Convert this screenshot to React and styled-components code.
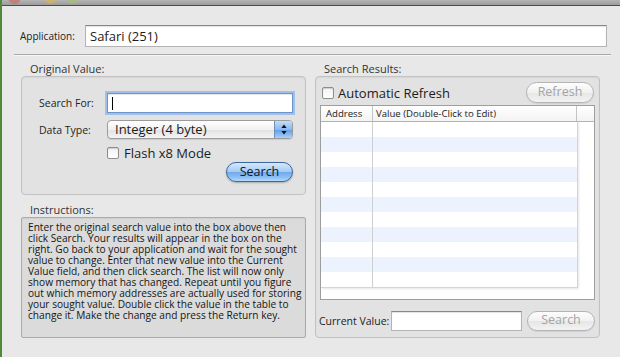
import React from "react";
import styled, { createGlobalStyle } from "styled-components";

const FONT = `"Open Sans", "DejaVu Sans", sans-serif`;

const Global = createGlobalStyle`
  html, body { margin: 0; padding: 0; background: #e8e8e8; }
  * { box-sizing: border-box; }
`;

const Window = styled.div`
  width: 620px;
  height: 357px;
  overflow: hidden;
  background: #e8e8e8;
  border-left: 2px solid #4f8a3c;
  display: flex;
  flex-direction: column;
  font-family: ${FONT};
  color: #1c1c1c;
`;

const TitleBar = styled.div`
  height: 6px;
  flex: none;
  background: linear-gradient(#b4b4b4, #9c9c9c);
  border-bottom: 1px solid #4c4c4c;
  display: flex;
  gap: 9px;
  padding-left: 6px;
  overflow: hidden;
`;

const Light = styled.span`
  width: 13px;
  height: 13px;
  margin-top: -9px;
  border-radius: 50%;
  background: ${(p) => p.$c};
  opacity: 0.55;
  &:nth-child(2) { margin-left: 14px; }
`;

const AppRow = styled.div`
  display: flex;
  align-items: center;
  margin-top: 19px;
  padding: 0 13px 0 18px;
`;

const AppLabel = styled.label`
  width: 65px;
  font-size: 10px;
  color: #222;
`;

const TextField = styled.div`
  height: ${(p) => p.$h || 20}px;
  background: #fff;
  border: 1px solid #b3b3b3;
  border-top-color: #878787;
  box-shadow: inset 0 1px 1px rgba(0, 0, 0, 0.12);
  display: flex;
  align-items: center;
  padding-left: 4px;
  font-size: 13px;
  ${(p) => (p.$grow ? "flex: 1;" : "")}
  ${(p) => (p.$w ? `width: ${p.$w}px; flex: none;` : "")}
  ${(p) =>
    p.$focus
      ? `border-color: #6e93c6; box-shadow: 0 0 0 2px #9fc0ea, inset 0 1px 1px rgba(0,0,0,0.1);`
      : ""}
`;

const Caret = styled.span`
  width: 1px;
  height: 13px;
  background: #000;
`;

const Separator = styled.div`
  height: 2px;
  margin: 7px 9px 0 12px;
  border-top: 1px solid #a8a8a8;
  border-bottom: 1px solid #f7f7f7;
`;

const Columns = styled.div`
  display: flex;
  gap: 9px;
  padding: 0 20px 0 19px;
  margin-top: 5px;
`;

const Column = styled.div`
  flex: 1 1 0;
  min-width: 0;
  display: flex;
  flex-direction: column;
`;

const GroupTitle = styled.div`
  height: 15px;
  line-height: 15px;
  padding-left: 9px;
  font-size: 11px;
  color: #333;
  margin-top: ${(p) => p.$mt || 0}px;
`;

const GroupBox = styled.div`
  height: ${(p) => p.$h}px;
  background: #e2e2e2;
  border: 1px solid #c2c2c2;
  border-radius: 4px;
  box-shadow: inset 0 1px 2px rgba(0, 0, 0, 0.06);
`;

const Form = styled(GroupBox)`
  padding: 16px 12px 0 17px;
  display: flex;
  flex-direction: column;
`;

const FormRow = styled.div`
  display: grid;
  grid-template-columns: 68px 1fr;
  align-items: center;
  margin-top: ${(p) => p.$mt || 0}px;
`;

const FieldLabel = styled.label`
  font-size: 10.5px;
  color: #222;
`;

const Popup = styled.div`
  height: 19px;
  display: flex;
  border: 1px solid #9c9c9c;
  border-radius: 4px;
  overflow: hidden;
  background: linear-gradient(#ffffff, #f1f1f1 50%, #e1e1e1 51%, #f4f4f4);
  box-shadow: 0 1px 1px rgba(0, 0, 0, 0.1);
`;

const PopupText = styled.span`
  flex: 1;
  font-size: 13px;
  line-height: 17px;
  padding-left: 7px;
`;

const Stepper = styled.span`
  width: 18px;
  border-left: 1px solid #6d8fbf;
  background: linear-gradient(#c4dcf8, #8ab9ef 50%, #5f9ce8 51%, #a8d0fb);
  display: flex;
  align-items: center;
  justify-content: center;
`;

const CheckRow = styled.label`
  display: flex;
  align-items: center;
  gap: ${(p) => p.$gap || 5}px;
  font-size: 13px;
  line-height: 16px;
  ${(p) => (p.$grow ? "flex: 1;" : "")}
  padding-left: ${(p) => p.$pl || 0}px;
`;

const CheckBox = styled.span`
  width: 12px;
  height: 12px;
  flex: none;
  border: 1px solid #8d8d8d;
  border-radius: 2px;
  background: linear-gradient(#f2f2f2, #ffffff);
  box-shadow: inset 0 1px 1px rgba(0, 0, 0, 0.15);
`;

const AquaButton = styled.button`
  justify-self: end;
  width: ${(p) => p.$w}px;
  height: ${(p) => p.$h || 20}px;
  flex: none;
  border-radius: 11px;
  font-family: ${FONT};
  font-size: 12.5px;
  padding: 0;
  line-height: 1;
  ${(p) =>
    p.$primary
      ? `
    border: 1px solid #3b679f;
    color: #0d1626;
    background: linear-gradient(#d6e8fc, #a4cbf4 48%, #72aaec 52%, #8cc0f5 80%, #b5dafd);
    box-shadow: 0 1px 2px rgba(0,0,0,0.25);
  `
      : `
    border: 1px solid #b4b4b4;
    color: #a4a4a4;
    background: linear-gradient(#fdfdfd, #f1f1f1 50%, #e6e6e6 51%, #f3f3f3);
    box-shadow: 0 1px 1px rgba(0,0,0,0.08);
  `}
`;

const Instructions = styled(GroupBox)`
  background: #dbdbdb;
  border-color: #ababab;
  border-radius: 2px;
  padding: 4px 2px 0 6px;
  font-size: 10.15px;
  line-height: 11px;
  color: #151515;
  overflow: hidden;
`;

const Line = styled.div`
  white-space: nowrap;
  height: 11px;
`;

const ResultsBox = styled(GroupBox)`
  padding: 5px 4px 0 4px;
  display: flex;
  flex-direction: column;
`;

const Toolbar = styled.div`
  height: 21px;
  display: flex;
  align-items: center;
  padding-right: 1px;
`;

const TableView = styled.div`
  margin-top: 2px;
  height: 195px;
  background: #fff;
  border: 1px solid #9e9e9e;
  display: flex;
  flex-direction: column;
`;

const Header = styled.div`
  display: grid;
  grid-template-columns: 52px 1fr 17px;
  height: 16px;
  flex: none;
  border-bottom: 1px solid #b3b3b3;
  background: linear-gradient(#ffffff, #f3f3f3);
`;

const HeadCell = styled.div`
  font-size: 9.6px;
  line-height: 15px;
  padding-left: ${(p) => p.$pl || 4}px;
  color: #222;
  white-space: nowrap;
  overflow: hidden;
  border-right: ${(p) => (p.$last ? "none" : "1px solid #c3c3c3")};
`;

const Body = styled.div`
  flex: 1;
  display: flex;
  padding: 0 16px 12px 0;
`;

const RowsArea = styled.div`
  flex: 1;
  display: flex;
  flex-direction: column;
  border-right: 1px solid #d4d4d4;
  border-bottom: 1px solid #d4d4d4;
  box-shadow: 1px 1px 2px rgba(0, 0, 0, 0.1);
`;

const Row = styled.div`
  height: 15px;
  flex: none;
  display: grid;
  grid-template-columns: 52px 1fr;
  background: ${(p) => (p.$alt ? "#edf3fe" : "#ffffff")};
`;

const Cell = styled.div`
  border-right: ${(p) => (p.$first ? "1px solid #cfcfcf" : "none")};
`;

const BottomRow = styled.div`
  margin-top: 10px;
  height: 21px;
  display: flex;
  align-items: center;
  padding-right: 1px;
`;

const BottomLabel = styled.label`
  width: 72px;
  flex: none;
  font-size: 10.5px;
  margin-left: -1px;
  color: #222;
`;

const Gap = styled.span`
  width: ${(p) => p.$w}px;
  flex: none;
`;

const instructionLines = [
  "Enter the original search value into the box above then",
  "click Search. Your results will appear in the box on the",
  "right. Go back to your application and wait for the sought",
  "value to change. Enter that new value into the Current",
  "Value field, and then click search. The list will now only",
  "show memory that has changed. Repeat until you figure",
  "out which memory addresses are actually used for storing",
  "your sought value. Double click the value in the table to",
  "change it. Make the change and press the Return key.",
];

function StepperIcon() {
  return (
    <svg width="6" height="11" viewBox="0 0 6 11">
      <path d="M3 0.5 L5.6 4 H0.4 Z" fill="#111" />
      <path d="M3 10.5 L5.6 7 H0.4 Z" fill="#111" />
    </svg>
  );
}

export default function App() {
  const rows = Array.from({ length: 11 }, (_, i) => i);
  return (
    <>
      <Global />
      <Window>
        <TitleBar>
          <Light $c="#d65a4e" />
          <Light $c="#e3b53a" />
          <Light $c="#9ec46a" />
        </TitleBar>

        <AppRow>
          <AppLabel>Application:</AppLabel>
          <TextField $grow $h={22}>Safari (251)</TextField>
        </AppRow>
        <Separator />

        <Columns>
          <Column>
            <GroupTitle>Original Value:</GroupTitle>
            <Form $h={119}>
              <FormRow>
                <FieldLabel>Search For:</FieldLabel>
                <TextField $focus>
                  <Caret />
                </TextField>
              </FormRow>
              <FormRow $mt={7}>
                <FieldLabel>Data Type:</FieldLabel>
                <Popup>
                  <PopupText>Integer (4 byte)</PopupText>
                  <Stepper>
                    <StepperIcon />
                  </Stepper>
                </Popup>
              </FormRow>
              <FormRow $mt={6}>
                <span />
                <CheckRow>
                  <CheckBox />
                  Flash x8 Mode
                </CheckRow>
              </FormRow>
              <FormRow $mt={1}>
                <span />
                <AquaButton $primary $w={67}>Search</AquaButton>
              </FormRow>
            </Form>

            <GroupTitle $mt={7}>Instructions:</GroupTitle>
            <Instructions $h={121}>
              {instructionLines.map((l) => (
                <Line key={l}>{l}</Line>
              ))}
            </Instructions>
          </Column>

          <Column>
            <GroupTitle>Search Results:</GroupTitle>
            <ResultsBox $h={262}>
              <Toolbar>
                <CheckRow $grow $pl={2} $gap={4}>
                  <CheckBox />
                  Automatic Refresh
                </CheckRow>
                <AquaButton $w={68} $h={21} disabled>
                  Refresh
                </AquaButton>
              </Toolbar>

              <TableView>
                <Header>
                  <HeadCell $pl={5}>Address</HeadCell>
                  <HeadCell $pl={3}>Value (Double-Click to Edit)</HeadCell>
                  <HeadCell $last />
                </Header>
                <Body>
                  <RowsArea>
                    {rows.map((i) => (
                      <Row key={i} $alt={i % 2 === 1}>
                        <Cell $first />
                        <Cell />
                      </Row>
                    ))}
                  </RowsArea>
                </Body>
              </TableView>

              <BottomRow>
                <BottomLabel>Current Value:</BottomLabel>
                <TextField $w={131} />
                <Gap $w={5} />
                <AquaButton $w={68} disabled>
                  Search
                </AquaButton>
              </BottomRow>
            </ResultsBox>
          </Column>
        </Columns>
      </Window>
    </>
  );
}
